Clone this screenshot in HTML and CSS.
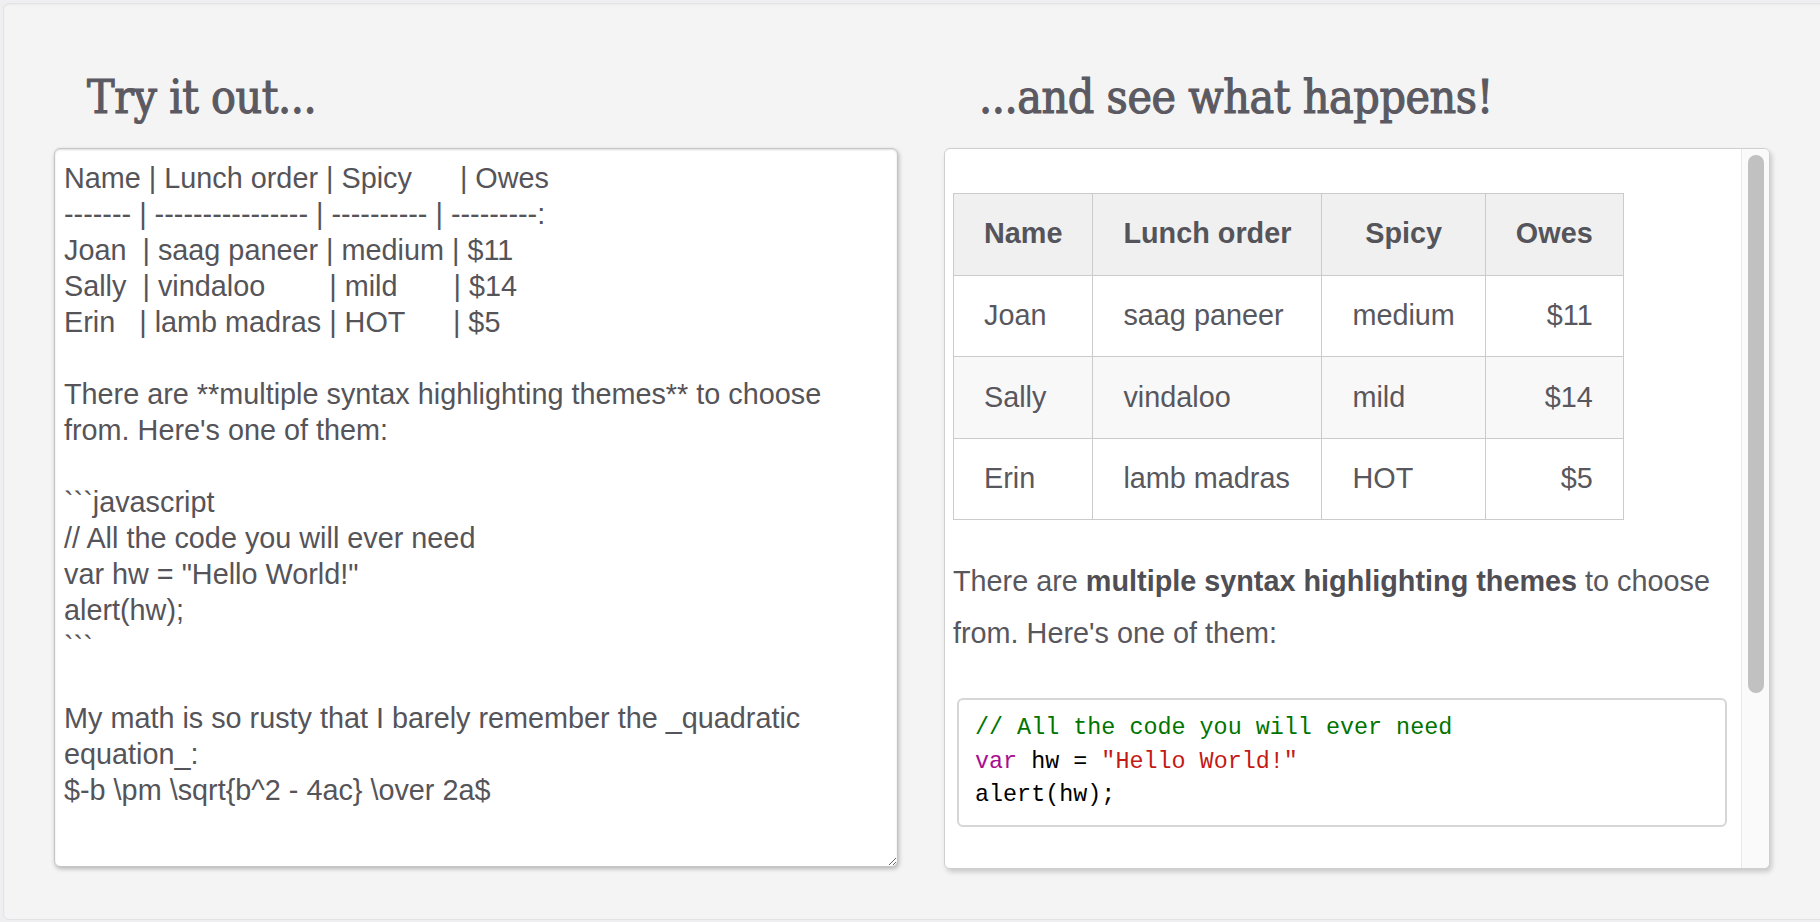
FILE: index.html
```html
<!DOCTYPE html>
<html lang="en">
<head>
<meta charset="utf-8">
<title>Try it out</title>
<link rel="stylesheet" href="styles.css">
</head>
<body>
<div class="stage">
  <section class="col">
    <h2 class="title">Try it out...</h2>
    <textarea class="editor" spellcheck="false">Name | Lunch order | Spicy      | Owes
------- | ---------------- | ---------- | ---------:
Joan  | saag paneer | medium | $11
Sally  | vindaloo        | mild       | $14
Erin   | lamb madras | HOT      | $5

There are **multiple syntax highlighting themes** to choose from. Here's one of them:

&#96;&#96;&#96;javascript
// All the code you will ever need
var hw = "Hello World!"
alert(hw);
&#96;&#96;&#96;

My math is so rusty that I barely remember the _quadratic equation_:
$-b \pm \sqrt{b^2 - 4ac} \over 2a$
</textarea>
  </section>
  <section class="col">
    <h2 class="title title-right">...and see what happens!</h2>
    <div class="preview">
      <div class="preview-body">
        <table class="lunch">
          <thead>
            <tr><th class="left">Name</th><th class="left">Lunch order</th><th class="center">Spicy</th><th class="right">Owes</th></tr>
          </thead>
          <tbody>
            <tr><td class="left">Joan</td><td class="left">saag paneer</td><td class="left">medium</td><td class="right">$11</td></tr>
            <tr class="striped"><td class="left">Sally</td><td class="left">vindaloo</td><td class="left">mild</td><td class="right">$14</td></tr>
            <tr><td class="left">Erin</td><td class="left">lamb madras</td><td class="left">HOT</td><td class="right">$5</td></tr>
          </tbody>
        </table>
        <p class="para">There are <strong>multiple syntax highlighting themes</strong> to choose from. Here's one of them:</p>
        <pre class="code"><span class="c-com">// All the code you will ever need</span>
<span class="c-kw">var</span> hw = <span class="c-str">"Hello World!"</span>
alert(hw);</pre>
      </div>
      <div class="scrollbar"><div class="thumb"></div></div>
    </div>
  </section>
</div>
</body>
</html>
```

FILE: styles.css
```css
html, body {
  margin: 0;
  padding: 0;
  height: 100%;
  overflow: hidden;
  background: #efeef1;
}

.stage {
  box-sizing: border-box;
  height: 917px;
  margin: 3px -24px 0 3px;
  padding: 0 0 0 50px;
  display: grid;
  grid-template-columns: 844px 826px;
  column-gap: 46px;
  align-items: start;
  background: #f4f4f4;
  border: 1px solid #e3e3e5;
  border-radius: 6px;
  box-shadow: inset 0 1px 2px rgba(0, 0, 0, 0.04);
}

.col {
  display: flex;
  flex-direction: column;
}

.title {
  margin: 0;
  padding: 66px 0 23px 33px;
  font-family: "DejaVu Serif", "Liberation Serif", serif;
  font-stretch: condensed;
  font-weight: normal;
  font-size: 46px;
  line-height: 55px;
  color: #5b5961;
  -webkit-text-stroke: 1.1px #5b5961;
  letter-spacing: -0.4px;
}

.title-right {
  padding-left: 35px;
}

.editor {
  box-sizing: border-box;
  width: 844px;
  height: 719px;
  margin: 0;
  padding: 11px 9px;
  border: 1px solid #c6c6c6;
  border-radius: 6px;
  box-shadow: 1px 2px 4px rgba(0, 0, 0, 0.25), inset 0 1px 2px rgba(0, 0, 0, 0.14);
  background: #fff;
  color: #555459;
  font-family: "Liberation Sans", Arial, sans-serif;
  font-size: 28.8px;
  line-height: 36px;
  resize: both;
  outline: none;
}

.preview {
  box-sizing: border-box;
  width: 826px;
  height: 721px;
  display: flex;
  border: 1px solid #cfcfcf;
  border-radius: 6px;
  box-shadow: 2px 3px 5px rgba(0, 0, 0, 0.18);
  background: #fff;
  overflow: hidden;
  color: #58575d;
  font-family: "Liberation Sans", Arial, sans-serif;
  font-size: 28.8px;
  line-height: 1.8;
}

.preview-body {
  flex: 1;
  min-width: 0;
  padding: 8px;
  overflow: hidden;
}

.scrollbar {
  box-sizing: border-box;
  flex: 0 0 28px;
  padding: 6px 5px 0 6px;
  background: #fafafa;
  border-left: 1px solid #e8e8e8;
}

.thumb {
  height: 538px;
  border-radius: 8px;
  background: #c1c1c1;
}

.lunch {
  margin: 36px 0 0;
  border-collapse: collapse;
}

.lunch th,
.lunch td {
  border: 1px solid #cbcbcb;
  padding: 14.4px 30px;
  white-space: nowrap;
}

.lunch th {
  background: #f0f0f0;
  font-weight: bold;
  color: #55545a;
}

.lunch .striped td {
  background: #f8f8f8;
}

.left { text-align: left; }
.center { text-align: center; }
.right { text-align: right; }

.para {
  margin: 36px 0 0;
}

.para strong {
  color: #4f4e54;
}

.code {
  margin: 38px 6px 0 4px;
  padding: 12px 16px;
  border: 2px solid #d6d6d6;
  border-radius: 6px;
  background: #fff;
  color: #000;
  font-family: "Liberation Mono", "Courier New", monospace;
  font-size: 23.4px;
  line-height: 33.5px;
  white-space: pre;
}

.c-com { color: #007400; }
.c-kw { color: #aa0d91; }
.c-str { color: #c41a16; }
```
